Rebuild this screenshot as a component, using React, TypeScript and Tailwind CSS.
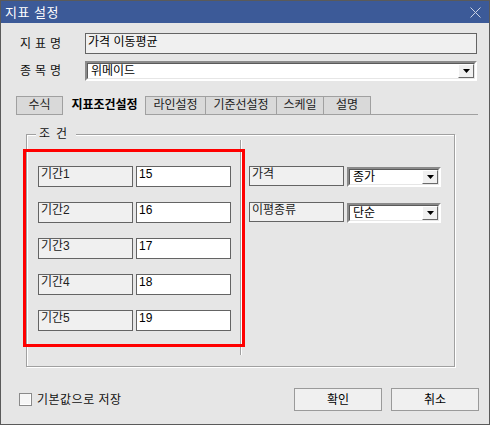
import React from 'react';

const FONT = 'font-["Liberation_Sans","Noto_Sans_CJK_KR",sans-serif]';

// Small sunken combo box with a dropdown arrow button
function Combo({ value, className }: { value: string; className?: string }) {
  return (
    <div
      className={`flex items-stretch bg-white border-2 border-t-[#8a8a8a] border-l-[#8a8a8a] border-r-white border-b-white ${className ?? ''}`}
    >
      <div className="flex-1 border border-t-[#5a5a5a] border-l-[#5a5a5a] border-r-[#e6e6e6] border-b-[#e6e6e6] flex items-stretch">
        <span className="flex-1 pl-[3px] leading-[15px] text-[12px] text-black">{value}</span>
        <span className="w-[16px] bg-[#f0f0f0] border border-t-white border-l-white border-r-[#6a6a6a] border-b-[#6a6a6a] flex items-center justify-center">
          <svg width="7" height="4" viewBox="0 0 7 4">
            <path d="M0 0H7L3.5 4Z" fill="#000" />
          </svg>
        </span>
      </div>
    </div>
  );
}

function Field({ label, value }: { label: string; value: string }) {
  return (
    <div className="flex gap-[3px]">
      <div className="w-[95px] h-[21px] bg-[#f0f0f0] border border-[#646464] pl-[2px] text-[12px] leading-[15px] text-[#222]">
        {label}
      </div>
      <div className="w-[95px] h-[21px] bg-white border border-[#646464] pl-[2px] text-[12px] leading-[15px] text-black">
        {value}
      </div>
    </div>
  );
}

const tabs = [
  { name: '수식', w: 'w-[47px]' },
  { name: '지표조건설정', w: 'w-[83px]', active: true },
  { name: '라인설정', w: 'w-[61px]' },
  { name: '기준선설정', w: 'w-[72px]' },
  { name: '스케일', w: 'w-[48px]' },
  { name: '설명', w: 'w-[48px]' },
];

export default function App() {
  return (
    <div className={`w-[490px] h-[425px] bg-[#e6e6e6] border border-[#5a5a5a] flex flex-col relative ${FONT}`}>
      {/* Title bar */}
      <div className="h-[22px] bg-[#3c5a98] flex items-center justify-between pl-[4px] pr-[8px]">
        <span className="text-white text-[13px] leading-none tracking-[0.5px]">지표 설정</span>
        <svg width="11" height="11" viewBox="0 0 11 11">
          <path d="M0.5 0.5L10.5 10.5M10.5 0.5L0.5 10.5" stroke="#c9d2e4" strokeWidth="1" />
        </svg>
      </div>

      {/* Indicator name */}
      <div className="flex items-center mt-[10px] pl-[19px]">
        <span className="w-[65px] text-[12px] tracking-[4px] text-[#111]">지표명</span>
        <div className="w-[392px] h-[21px] bg-[#f0f0f0] border border-[#646464] pl-[2px] text-[12px] leading-[17px] text-black">
          가격 이동평균
        </div>
      </div>

      {/* Symbol name */}
      <div className="flex items-center mt-[7px] pl-[19px]">
        <span className="w-[65px] text-[12px] tracking-[4px] text-[#111]">종목명</span>
        <Combo value="위메이드" className="w-[392px] h-[20px]" />
      </div>

      {/* Tabs */}
      <div className="flex items-end mt-[15px] ml-[15px] mr-[11px] h-[19px] border-b border-[#a0a0a0]">
        {tabs.map(t =>
          t.active ? (
            <div
              key={t.name}
              className={`${t.w} h-[20px] -mb-px bg-[#e6e6e6] text-center text-[12px] leading-[20px] font-bold text-black`}
            >
              {t.name}
            </div>
          ) : (
            <div
              key={t.name}
              className={`${t.w} h-[19px] -mb-px bg-[#d9d9d9] border border-[#a0a0a0] -ml-px first:ml-0 text-center text-[12px] leading-[17px] text-[#222]`}
            >
              {t.name}
            </div>
          )
        )}
      </div>

      {/* Condition group */}
      <div className="relative ml-[25px] mt-[19px] w-[429px] h-[233px] border border-[#a0a0a0] shadow-[inset_1px_1px_0_#fff,1px_1px_0_#fff]">
        <span className="absolute -top-[8px] left-[9px] px-[3px] bg-[#e6e6e6] text-[12px] leading-[14px] tracking-[6px] text-[#111]">
          조건
        </span>
        <div className="flex pt-[5px] pl-[11px]">
          <div className="flex flex-col gap-[15px] pt-[26px]">
            <Field label="기간1" value="15" />
            <Field label="기간2" value="16" />
            <Field label="기간3" value="17" />
            <Field label="기간4" value="18" />
            <Field label="기간5" value="19" />
          </div>
          <div className="ml-[9px] w-[2px] h-[215px] border-l border-[#a0a0a0] bg-white" />
          <div className="flex flex-col gap-[15px] pt-[26px] ml-[7px]">
            <div className="flex gap-[3px]">
              <div className="w-[95px] h-[20px] bg-[#f0f0f0] border border-[#646464] pl-[2px] text-[12px] leading-[15px] text-[#222]">
                가격
              </div>
              <Combo value="종가" className="w-[94px] h-[20px] mt-px" />
            </div>
            <div className="flex gap-[3px]">
              <div className="w-[95px] h-[20px] bg-[#f0f0f0] border border-[#646464] pl-[2px] text-[12px] leading-[15px] text-[#222]">
                이평종류
              </div>
              <Combo value="단순" className="w-[94px] h-[20px] mt-px" />
            </div>
          </div>
        </div>
      </div>

      {/* Annotation highlight */}
      <div className="absolute left-[22px] top-[148px] w-[222px] h-[198px] border-[3px] border-[#ff0000]" />

      {/* Footer */}
      <div className="flex items-center justify-between mt-[21px] pl-[18px] pr-[10px]">
        <label className="flex items-center gap-[5px] text-[12px] text-[#111] tracking-[0.5px]">
          <span className="w-[13px] h-[13px] border border-[#8a8a8a] bg-[#f6f6f6] shadow-[inset_-1px_-1px_0_#fff]" />
          기본값으로 저장
        </label>
        <div className="flex gap-[9px]">
          <button className="w-[88px] h-[23px] bg-[#f0f0f0] border border-[#9a9a9a] text-[12px] text-black">확인</button>
          <button className="w-[88px] h-[23px] bg-[#f0f0f0] border border-[#9a9a9a] text-[12px] text-black">취소</button>
        </div>
      </div>
    </div>
  );
}
